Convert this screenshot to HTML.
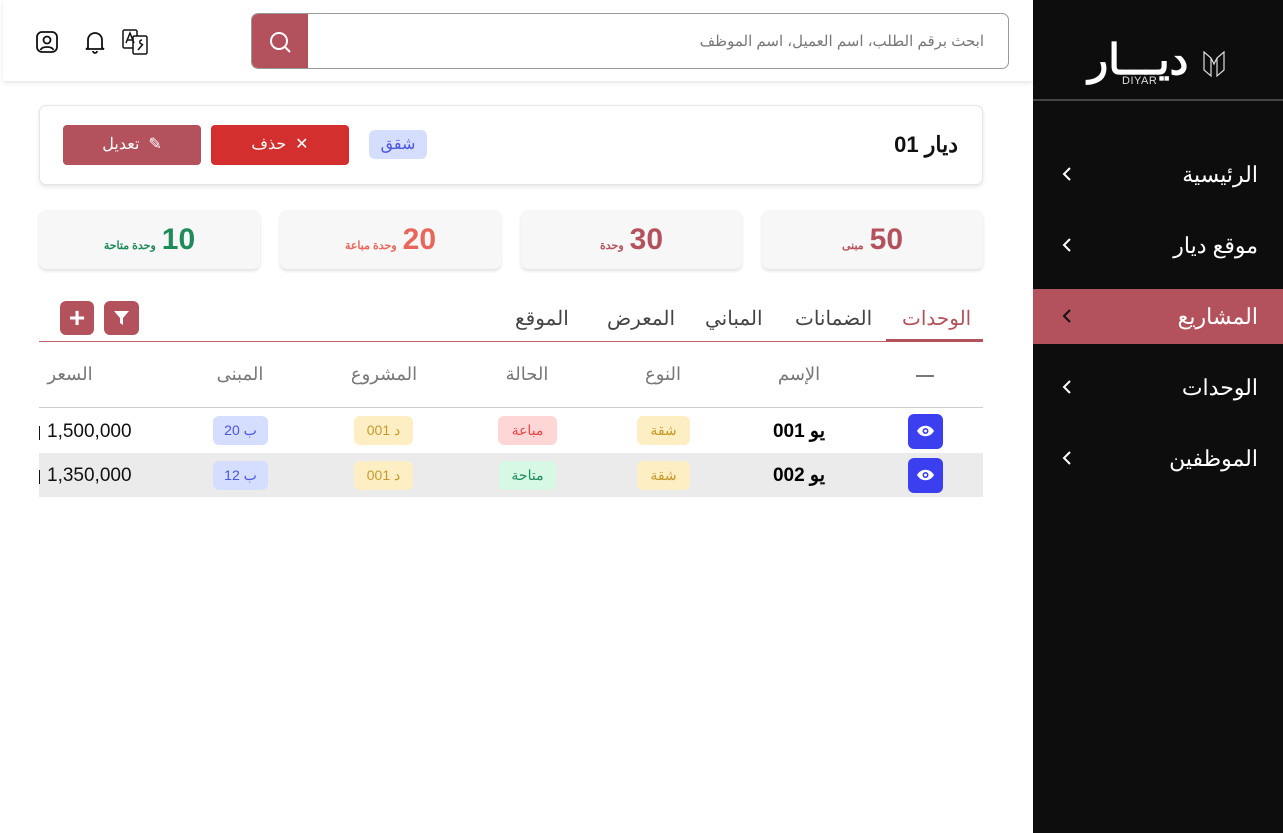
<!DOCTYPE html>
<html dir="ltr"><head><meta charset="utf-8">
<style>
*{box-sizing:border-box;margin:0;padding:0}
body{width:1283px;height:833px;position:relative;background:#fff;font-family:"Liberation Sans","Noto Sans CJK SC",sans-serif;overflow:hidden}
.a{position:absolute}
.side{left:1033px;top:0;width:250px;height:833px;background:#0d0d0d}
.mi{position:absolute;left:0;width:250px;height:55px;color:#fff;font-size:22px;direction:rtl;padding-right:25px;line-height:55px}
.mi svg{position:absolute;left:28px;top:19px}
.pill{position:absolute;height:29px;border-radius:6px;font-size:14px;text-align:center;line-height:29px}
.stat{position:absolute;top:210px;width:221px;height:59px;background:#f7f7f7;border-radius:7px;box-shadow:0 2px 3px rgba(0,0,0,.12);text-align:center;line-height:59px;direction:rtl}
.stat b{font-size:30px}
.stat span{font-size:11px;font-weight:bold;margin-right:6px}
.tab{position:absolute;top:306px;font-size:20px;color:#444}
.th{position:absolute;top:364px;font-size:18px;color:#777;transform:translateX(-50%)}
.c{position:absolute;transform:translateX(-50%)}
</style></head><body>
<div class="a side">
  <div class="a" style="left:55px;top:38px;color:#fff;font-size:42px;font-weight:bold;line-height:44px">ديـــار</div>
  <div class="a" style="left:89px;top:75px;color:#ddd;font-size:11px;letter-spacing:.5px">DIYAR</div>
  <svg class="a" style="left:170px;top:50px" width="22" height="28" viewBox="0 0 22 28" fill="none" stroke="#ddd" stroke-width="1.2"><path d="M1 2L8 8V26L1 20Z M21 2L14 8V26L21 20Z M8 8L11 14L14 8"/></svg>
  <div class="a" style="left:0;top:99px;width:250px;height:2px;background:#444"></div>
  <div class="mi" style="top:147px">الرئيسية<svg width="12" height="16" viewBox="0 0 12 16"><path d="M9 2L3 8L9 14" stroke="#fff" stroke-width="2" fill="none"/></svg></div>
  <div class="mi" style="top:218px">موقع ديار<svg width="12" height="16" viewBox="0 0 12 16"><path d="M9 2L3 8L9 14" stroke="#fff" stroke-width="2" fill="none"/></svg></div>
  <div class="mi" style="top:289px;background:#b3525c">المشاريع<svg width="12" height="16" viewBox="0 0 12 16"><path d="M9 2L3 8L9 14" stroke="#111" stroke-width="2" fill="none"/></svg></div>
  <div class="mi" style="top:360px">الوحدات<svg width="12" height="16" viewBox="0 0 12 16"><path d="M9 2L3 8L9 14" stroke="#fff" stroke-width="2" fill="none"/></svg></div>
  <div class="mi" style="top:431px">الموظفين<svg width="12" height="16" viewBox="0 0 12 16"><path d="M9 2L3 8L9 14" stroke="#fff" stroke-width="2" fill="none"/></svg></div>
</div>
<div class="a" style="left:3px;top:0;width:1030px;height:81px;background:#fff;box-shadow:0 2px 4px rgba(0,0,0,.1)"></div>
<svg class="a" style="left:35px;top:30px" width="24" height="24" viewBox="0 0 24 24" fill="none" stroke="#111" stroke-width="1.8"><rect x="2" y="2" width="20" height="20" rx="5"/><circle cx="12" cy="10" r="3.5"/><path d="M5.5 20c1.5-4 11.5-4 13 0"/></svg>
<svg class="a" style="left:84px;top:30px" width="22" height="24" viewBox="0 0 22 24" fill="none" stroke="#111" stroke-width="1.8"><path d="M4 18V10a7 7 0 0 1 14 0v8l2 1H2z"/><path d="M9 21a2 2 0 0 0 4 0"/></svg>
<svg class="a" style="left:122px;top:29px" width="27" height="26" viewBox="0 0 27 26" fill="none" stroke="#111" stroke-width="1.5"><rect x="1" y="1" width="14" height="18" rx="1.5"/><rect x="11" y="7" width="14" height="18" rx="1.5" fill="#fff"/><path d="M4 14l4-10 4 10M5.5 11h5"/><path d="M20 11c-3 0-3 4 0 4M16 21l5-6"/></svg>
<div class="a" style="left:251px;top:13px;width:758px;height:56px;border:1px solid #999;border-radius:7px;overflow:hidden">
  <div class="a" style="left:0;top:0;width:56px;height:56px;background:#b3525c"></div>
  <svg class="a" style="left:16px;top:16px" width="24" height="24" viewBox="0 0 24 24" fill="none" stroke="#fff" stroke-width="2"><circle cx="11" cy="11" r="8"/><path d="M17 17l5 5"/></svg>
  <div class="a" style="right:24px;top:18px;font-size:15px;color:#777;direction:rtl">ابحث برقم الطلب، اسم العميل، اسم الموظف</div>
</div>
<div class="a" style="left:39px;top:105px;width:944px;height:80px;border:1px solid #e5e5e5;border-radius:7px;box-shadow:0 2px 4px rgba(0,0,0,.1)"></div>
<div class="a" style="right:325px;top:132px;font-size:22px;font-weight:bold;direction:rtl;color:#111">ديار 01</div>
<div class="pill" style="left:369px;top:130px;width:58px;background:#d6deff;color:#4a55e0;font-size:16px">شقق</div>
<div class="a" style="left:211px;top:125px;width:138px;height:40px;background:#d32f2f;border-radius:4px;color:#fff;font-size:16px;text-align:center;line-height:40px">حذف &nbsp;✕</div>
<div class="a" style="left:63px;top:125px;width:138px;height:40px;background:#b3525c;border-radius:4px;color:#fff;font-size:16px;text-align:center;line-height:40px">تعديل &nbsp;✎</div>
<div class="stat" style="left:762px"><b style="color:#b3525c">50</b><span style="color:#b3525c">مبنى</span></div>
<div class="stat" style="left:521px"><b style="color:#b3525c">30</b><span style="color:#b3525c">وحدة</span></div>
<div class="stat" style="left:280px"><b style="color:#e8675a">20</b><span style="color:#e8675a">وحدة مباعة</span></div>
<div class="stat" style="left:39px"><b style="color:#1f8a5a">10</b><span style="color:#1f8a5a">وحدة متاحة</span></div>
<div class="tab" style="left:902px;color:#b3525c">الوحدات</div>
<div class="tab" style="left:795px">الضمانات</div>
<div class="tab" style="left:705px">المباني</div>
<div class="tab" style="left:607px">المعرض</div>
<div class="tab" style="left:515px">الموقع</div>
<div class="a" style="left:39px;top:341px;width:944px;height:1px;background:#c0606a"></div>
<div class="a" style="left:886px;top:339px;width:97px;height:3px;background:#b3525c"></div>
<div class="a" style="left:60px;top:301px;width:34px;height:34px;background:#b3525c;border-radius:6px;color:#fff;font-size:28px;text-align:center;line-height:33px;font-weight:bold">+</div>
<div class="a" style="left:104px;top:301px;width:35px;height:34px;background:#b3525c;border-radius:6px"><svg style="position:absolute;left:10px;top:10px" width="15" height="14" viewBox="0 0 15 14"><path d="M0 0H15L9 7V14L6 12V7Z" fill="#fff"/></svg></div>
<div class="a" style="left:916px;top:375px;width:18px;height:2px;background:#777"></div>
<div class="th" style="left:799px">الإسم</div>
<div class="th" style="left:663px">النوع</div>
<div class="th" style="left:527px">الحالة</div>
<div class="th" style="left:384px">المشروع</div>
<div class="th" style="left:240px">المبنى</div>
<div class="th" style="left:70px">السعر</div>
<div class="a" style="left:39px;top:407px;width:944px;height:1px;background:#ccc"></div>
<div class="a" style="left:39px;top:453px;width:944px;height:44px;background:#ebebeb"></div>
<div class="a" style="left:908px;top:414px;width:35px;height:35px;background:#3b3ff0;border-radius:6px"></div>
<div class="a" style="left:908px;top:458px;width:35px;height:35px;background:#3b3ff0;border-radius:6px"></div>
<svg class="a" style="left:916px;top:424px" width="19" height="14" viewBox="0 0 19 14"><path d="M1 7C5 0 14 0 18 7C14 14 5 14 1 7Z" fill="#fff"/><circle cx="9.5" cy="7" r="3" fill="#3b3ff0"/><circle cx="9.5" cy="7" r="1.4" fill="#fff"/></svg>
<svg class="a" style="left:916px;top:468px" width="19" height="14" viewBox="0 0 19 14"><path d="M1 7C5 0 14 0 18 7C14 14 5 14 1 7Z" fill="#fff"/><circle cx="9.5" cy="7" r="3" fill="#3b3ff0"/><circle cx="9.5" cy="7" r="1.4" fill="#fff"/></svg>
<div class="c" style="left:799px;top:420px;font-size:19px;font-weight:bold;direction:rtl">يو 001</div>
<div class="c" style="left:799px;top:464px;font-size:19px;font-weight:bold;direction:rtl">يو 002</div>
<div class="pill" style="left:637px;top:416px;width:53px;background:#fdeec4;color:#c49a2a">شقة</div>
<div class="pill" style="left:637px;top:461px;width:53px;background:#fdeec4;color:#c49a2a">شقة</div>
<div class="pill" style="left:498px;top:416px;width:59px;background:#ffd6d6;color:#e8474a">مباعة</div>
<div class="pill" style="left:499px;top:461px;width:57px;background:#d6f8e4;color:#1f8a5a">متاحة</div>
<div class="pill" style="left:354px;top:416px;width:59px;background:#fdeec4;color:#c49a2a;direction:rtl">د 001</div>
<div class="pill" style="left:354px;top:461px;width:59px;background:#fdeec4;color:#c49a2a;direction:rtl">د 001</div>
<div class="pill" style="left:213px;top:416px;width:55px;background:#d6deff;color:#4a55e0;direction:rtl">ب 20</div>
<div class="pill" style="left:213px;top:461px;width:55px;background:#d6deff;color:#4a55e0;direction:rtl">ب 12</div>
<div class="a" style="left:47px;top:421px;font-size:19px;color:#111">1,500,000</div>
<div class="a" style="left:47px;top:465px;font-size:19px;color:#111">1,350,000</div>
<div class="a" style="left:39px;top:426px;width:1px;height:14px;background:#111"></div>
<div class="a" style="left:39px;top:470px;width:1px;height:14px;background:#111"></div>
</body></html>
